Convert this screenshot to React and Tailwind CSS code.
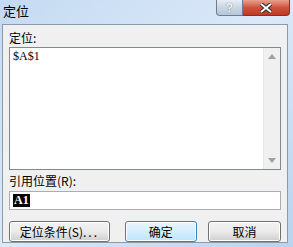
const cjk = { fontFamily: '"Noto Sans CJK SC", "Liberation Sans", sans-serif' }

function Btn({ children, primary, className = '' }) {
  return (
    <button
      type="button"
      className={`h-[21px] rounded-[3px] border text-[12px] leading-none text-black ${
        primary
          ? 'border-[#3c7fb1] bg-gradient-to-b from-[#eaf6fd] to-[#bee6fd] shadow-[inset_0_0_0_1px_#fff]'
          : 'border-[#707070] bg-gradient-to-b from-[#f2f2f2] via-[#ebebeb] to-[#cfcfcf] shadow-[inset_0_0_0_1px_#fff]'
      } ${className}`}
    >
      {children}
    </button>
  )
}

export default function App() {
  return (
    <div className="w-[293px] h-[247px] overflow-hidden bg-gradient-to-br from-[#c4daf2] via-[#dbe9f8] to-[#b9d3ee] flex flex-col" style={cjk}>
      <div className="h-[24px] flex items-start pl-[3px] relative">
        <span className="mt-[4px] text-[13px] leading-[14px] text-black">定位</span>
        <div className="absolute top-0 left-[216px] flex">
          <div className="w-[27px] h-[16px] rounded-bl-[4px] border border-t-0 border-[#6b7d91] bg-gradient-to-b from-[#e6eef7] via-[#c9d6e4] to-[#b6c6d8] flex items-center justify-center text-[12px] font-bold text-[#f4f6f8] [text-shadow:0_0_1px_#555]" style={{ fontFamily: '"Liberation Sans", sans-serif' }}>
            ?
          </div>
          <div className="w-[47px] h-[16px] rounded-br-[4px] border border-t-0 border-l-0 border-[#6b3a30] bg-gradient-to-b from-[#e7a190] via-[#d0523a] to-[#c03a22] flex items-center justify-center">
            <svg width="14" height="10" viewBox="0 0 14 10">
              <path d="M2 1 L12 9 M12 1 L2 9" stroke="#2b2b2b" strokeWidth="4" />
              <path d="M2 1 L12 9 M12 1 L2 9" stroke="#fff" strokeWidth="2" />
            </svg>
          </div>
        </div>
      </div>
      <div className="ml-[2px] mr-[5px] mb-[4px] flex-1 bg-[#f0f0f0] border border-[#8c9bab] flex flex-col px-[6px]">
        <div className="mt-[6px] text-[12px] leading-[14px] text-black">定位:</div>
        <div className="mt-[2px] h-[123px] border border-[#828790] bg-white flex">
          <div className="flex-1 pl-[3px] pt-[1px] text-[12px] leading-[14px] text-black" style={{ fontFamily: '"Liberation Serif", serif' }}>
            $A$1
          </div>
          <div className="w-[17px] bg-[#f0f0f0] border-l border-[#e6e6e6] flex flex-col items-center justify-between py-[6px]">
            <svg width="8" height="5" viewBox="0 0 8 5"><path d="M4 0 L8 5 L0 5 Z" fill="#a0a0a0" /></svg>
            <svg width="8" height="5" viewBox="0 0 8 5"><path d="M0 0 L8 0 L4 5 Z" fill="#a0a0a0" /></svg>
          </div>
        </div>
        <div className="mt-[4px] text-[12px] leading-[14px] text-black">引用位置(R):</div>
        <div className="mt-[3px] h-[19px] border border-[#abadb3] bg-white flex items-center pl-[3px]">
          <span className="bg-black text-white text-[12px] leading-[13px] font-bold px-[1px]" style={{ fontFamily: '"Liberation Serif", serif' }}>A1</span>
        </div>
        <div className="mt-[11px] flex items-center">
          <Btn className="w-[102px]">定位条件(S)<span className="tracking-[2px]">...</span></Btn>
          <Btn primary className="w-[73px] ml-[15px]">确定</Btn>
          <Btn className="w-[74px] ml-[11px]">取消</Btn>
        </div>
      </div>
    </div>
  )
}
